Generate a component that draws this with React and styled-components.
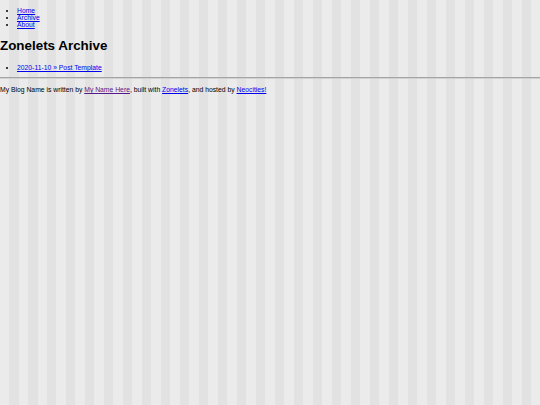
import React from "react";
import styled, { createGlobalStyle } from "styled-components";

const Global = createGlobalStyle`
  html, body { margin: 0; padding: 0; }
  body {
    min-height: 405px;
    background-color: #e9e9e9;
    background-image: repeating-linear-gradient(
      90deg,
      #ebebeb 0px,
      #ebebeb 9px,
      #e2e2e2 9px,
      #e2e2e2 18.5px,
      #ebebeb 18.5px,
      #ebebeb 19px
    );
    font-family: "Liberation Sans", Arial, sans-serif;
    font-size: 6.8px;
    color: #000;
  }
`;

const Page = styled.div`
  display: flow-root;
`;

const List = styled.ul`
  margin: ${(p) => (p.$tight ? "6.8px 0 5.8px" : "6.8px 0")};
  padding-left: 17px;
  list-style: disc;
  line-height: normal;
`;

const Item = styled.li``;

const Link = styled.a`
  color: ${(p) => (p.$visited ? "#551a8b" : "#0000ee")};
  text-decoration: underline;
`;

const Title = styled.h1`
  font-size: 13.4px;
  font-weight: bold;
  margin: 10.6px 0 11px;
`;

const Rule = styled.hr`
  margin: 0;
  border: 0;
  border-top: 1px solid #a5a5a5;
  border-bottom: 1px solid #d0d0d0;
`;

const Footer = styled.p`
  margin: 6.8px 0;
`;

export default function App() {
  return (
    <>
      <Global />
      <Page>
        <List>
          <Item><Link href="#">Home</Link></Item>
          <Item><Link href="#">Archive</Link></Item>
          <Item><Link href="#">About</Link></Item>
        </List>
        <Title>Zonelets Archive</Title>
        <List $tight>
          <Item><Link href="#">2020-11-10 » Post Template</Link></Item>
        </List>
        <Rule />
        <Footer>
          My Blog Name is written by <Link href="#" $visited>My Name Here</Link>, built with{" "}
          <Link href="#">Zonelets</Link>, and hosted by <Link href="#">Neocities!</Link>
        </Footer>
      </Page>
    </>
  );
}
